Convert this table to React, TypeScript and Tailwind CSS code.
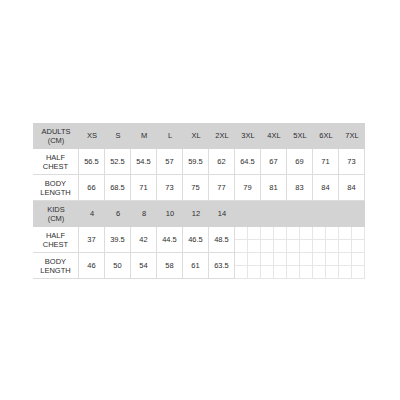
const adultSizes = ["XS", "S", "M", "L", "XL", "2XL", "3XL", "4XL", "5XL", "6XL", "7XL"];
const adultChest = ["56.5", "52.5", "54.5", "57", "59.5", "62", "64.5", "67", "69", "71", "73"];
const adultLength = ["66", "68.5", "71", "73", "75", "77", "79", "81", "83", "84", "84"];

const kidSizes = ["4", "6", "8", "10", "12", "14"];
const kidChest = ["37", "39.5", "42", "44.5", "46.5", "48.5"];
const kidLength = ["46", "50", "54", "58", "61", "63.5"];

function HeaderRow({ label, sizes }: { label: [string, string]; sizes: string[] }) {
  return (
    <div className="flex h-[26px] bg-[#d3d3d3]">
      <div className="flex w-[46px] flex-col items-center justify-center leading-[9px]">
        <span>{label[0]}</span>
        <span>{label[1]}</span>
      </div>
      {sizes.map((s) => (
        <div key={s} className="flex w-[26px] items-center justify-center">
          {s}
        </div>
      ))}
    </div>
  );
}

function DataRow({ label, values }: { label: [string, string]; values: string[] }) {
  return (
    <div className="flex h-[26px]">
      <div className="flex w-[46px] flex-col items-center justify-center border-r border-b border-[#dcdcdc] leading-[9px]">
        <span>{label[0]}</span>
        <span>{label[1]}</span>
      </div>
      {values.map((v, i) => (
        <div
          key={i}
          className="flex w-[26px] items-center justify-center border-r border-b border-[#dcdcdc]"
        >
          {v}
        </div>
      ))}
    </div>
  );
}

export default function App() {
  return (
    <div className="h-[400px] w-[400px] bg-white pt-[123px] pl-[33px] font-['Liberation_Sans',Arial,sans-serif] text-[7.5px] text-[#2e2e2e]">
      <div className="w-[332px]">
        <HeaderRow label={["ADULTS", "(CM)"]} sizes={adultSizes} />
        <DataRow label={["HALF", "CHEST"]} values={adultChest} />
        <DataRow label={["BODY", "LENGTH"]} values={adultLength} />
        <HeaderRow label={["KIDS", "(CM)"]} sizes={kidSizes} />
        <div className="flex">
          <div>
            <DataRow label={["HALF", "CHEST"]} values={kidChest} />
            <DataRow label={["BODY", "LENGTH"]} values={kidLength} />
          </div>
          {/* blank graph-paper area */}
          <div className="grid h-[52px] w-[130px] grid-cols-10 grid-rows-4">
            {Array.from({ length: 40 }).map((_, i) => (
              <div key={i} className="border-r border-b border-[#e6e6e6]" />
            ))}
          </div>
        </div>
      </div>
    </div>
  );
}
